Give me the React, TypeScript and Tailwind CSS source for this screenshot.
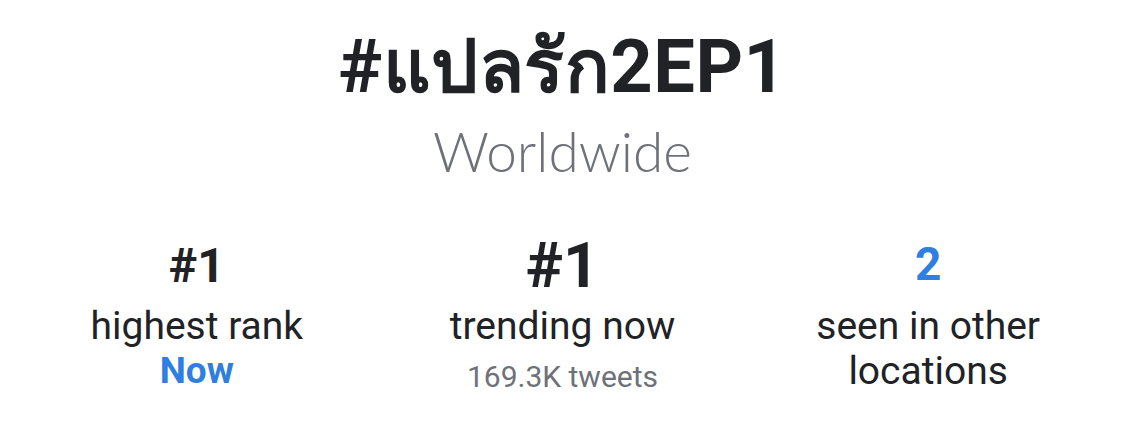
export default function App() {
  return (
    <div className="w-[1125px] h-[431px] bg-white flex flex-col items-center font-['Roboto','Noto_Sans',sans-serif] text-[#202226]">
      <h1 className="mt-[27px] text-[74px] font-bold leading-[80px] tracking-[0.5px]">#แปลรัก2EP1</h1>
      <div className="mt-[9px] font-['Lato',sans-serif] font-light text-[55px] leading-[70px] text-[#6e7177]">Worldwide</div>

      <div className="mt-[44px] w-full px-[14px] grid grid-cols-3 text-center">
        <div className="flex flex-col items-center">
          <div className="mt-[8px] text-[48px] font-bold leading-[56px]">#1</div>
          <div className="mt-[10px] text-[39px] leading-[45px]">highest rank</div>
          <div className="text-[37px] font-bold leading-[43px] text-[#2f7fe0]">Now</div>
        </div>
        <div className="flex flex-col items-center">
          <div className="mt-[4px] text-[63px] font-bold leading-[63px]">#1</div>
          <div className="mt-[7px] text-[39px] leading-[45px]">trending now</div>
          <div className="mt-[8px] text-[30px] leading-[40px] text-[#6e7177]">169.3K tweets</div>
        </div>
        <div className="flex flex-col items-center">
          <div className="mt-[6px] text-[46px] font-bold leading-[56px] text-[#2f7fe0]">2</div>
          <div className="mt-[12px] text-[39px] leading-[45px]">seen in other<br />locations</div>
        </div>
      </div>
    </div>
  );
}
